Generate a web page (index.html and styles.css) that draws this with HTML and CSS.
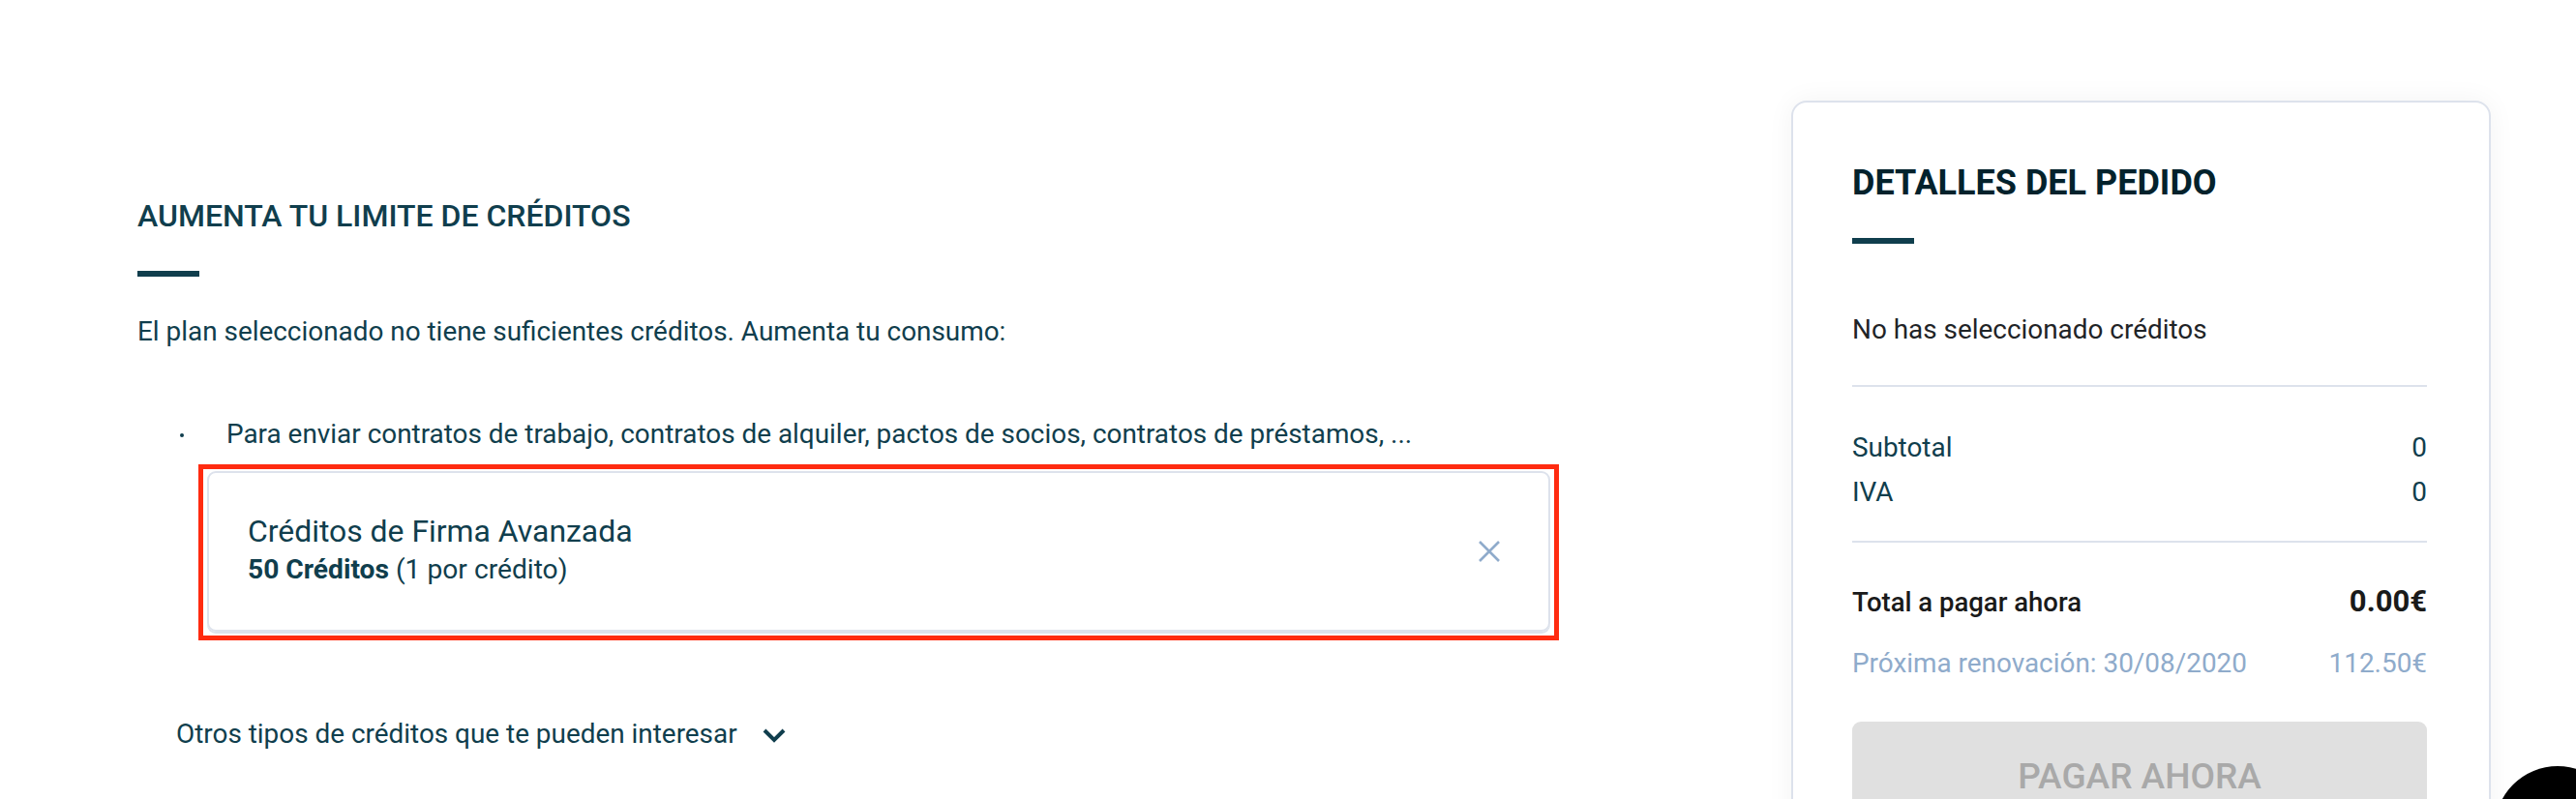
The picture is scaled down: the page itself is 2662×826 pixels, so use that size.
FILE: index.html
```html
<!DOCTYPE html>
<html lang="es">
<head>
<meta charset="utf-8">
<title>Aumenta tu limite de créditos</title>
<link rel="stylesheet" href="styles.css">
</head>
<body>
<div class="page">
  <main class="main-col">
    <h1 class="section-title">AUMENTA TU LIMITE DE CRÉDITOS</h1>
    <div class="accent-bar"></div>
    <p class="intro">El plan seleccionado no tiene suficientes créditos. Aumenta tu consumo:</p>
    <ul class="uses">
      <li class="use-item"><span class="dot"></span><span>Para enviar contratos de trabajo, contratos de alquiler, pactos de socios, contratos de préstamos, ...</span></li>
    </ul>
    <div class="highlight">
      <div class="credit-card">
        <div class="credit-info">
          <div class="credit-name">Créditos de Firma Avanzada</div>
          <div class="credit-qty"><strong>50 Créditos</strong> (1 por crédito)</div>
        </div>
        <svg class="close-icon" width="24" height="24" viewBox="0 0 24 24" aria-hidden="true">
          <path d="M2 2 L22 22 M22 2 L2 22" stroke="#8fabcb" stroke-width="2.6" fill="none"/>
        </svg>
      </div>
    </div>
    <div class="more">
      <span>Otros tipos de créditos que te pueden interesar</span>
      <svg class="chevron" width="24" height="16" viewBox="0 0 24 16" aria-hidden="true">
        <path d="M2 3 L12 13 L22 3" stroke="#103e4d" stroke-width="4" fill="none"/>
      </svg>
    </div>
  </main>
  <aside class="order">
    <h2 class="order-title">DETALLES DEL PEDIDO</h2>
    <div class="accent-bar"></div>
    <p class="empty">No has seleccionado créditos</p>
    <div class="divider"></div>
    <div class="row"><span>Subtotal</span><span>0</span></div>
    <div class="row"><span>IVA</span><span>0</span></div>
    <div class="divider divider-b"></div>
    <div class="row total"><span>Total a pagar ahora</span><span class="total-amount">0.00€</span></div>
    <div class="row renewal"><span>Próxima renovación: 30/08/2020</span><span>112.50€</span></div>
    <button class="pay" type="button">PAGAR AHORA</button>
  </aside>
</div>
<div class="chat-bubble"></div>
</body>
</html>
```

FILE: styles.css
```css
* { box-sizing: border-box; }
html, body {
  margin: 0;
  padding: 0;
  background: #ffffff;
  overflow: hidden;
}
body {
  font-family: Roboto, "Liberation Sans", Arial, sans-serif;
  color: #103e4d;
  width: 2662px;
  height: 826px;
}
.page {
  display: flex;
  align-items: flex-start;
  padding-left: 142px;
}
.main-col {
  width: 1469px;
  padding-top: 204px;
  flex-shrink: 0;
}
.section-title {
  margin: 0;
  font-size: 32px;
  line-height: 38px;
  font-weight: 500;
  color: #103e4d;
}
.accent-bar {
  width: 64px;
  height: 6px;
  background: #103e4d;
  margin-top: 38px;
}
.intro {
  margin: 41px 0 0;
  font-size: 27.9px;
  line-height: 32px;
}
.uses {
  list-style: none;
  margin: 74px 0 0;
  padding: 0 0 0 44px;
}
.use-item {
  display: flex;
  align-items: center;
  font-size: 27.9px;
  line-height: 32px;
}
.dot {
  width: 4px;
  height: 4px;
  border-radius: 50%;
  background: #103e4d;
  margin-right: 44px;
  margin-top: 2px;
  flex-shrink: 0;
}
.highlight {
  margin: 15px 0 0 63px;
  width: 1406px;
  border: 5px solid #ff2b10;
  padding: 2px 4px 4px 4px;
}
.credit-card {
  border: 2px solid #dde2ec;
  border-radius: 9px;
  box-shadow: 0 2px 0 #dde2ec;
  padding: 41px 49px 42px 40px;
  display: flex;
  align-items: center;
  justify-content: space-between;
}
.credit-name {
  font-size: 31.9px;
  line-height: 39px;
}
.credit-qty {
  font-size: 28.2px;
  line-height: 40px;
}
.credit-qty strong { font-weight: 700; }
.close-icon { display: block; }
.more {
  margin: 81px 0 0 40px;
  display: flex;
  align-items: center;
  font-size: 27.9px;
  line-height: 32px;
}
.chevron {
  margin-left: 26px;
  margin-top: 2px;
}
.order {
  margin-left: 240px;
  margin-top: 104px;
  width: 723px;
  height: 800px;
  flex-shrink: 0;
  border: 2px solid #dde2ec;
  border-radius: 16px;
  box-shadow: 0 0 28px rgba(0, 0, 0, 0.05);
  background: #fff;
  padding: 62px 64px 0 61px;
}
.order-title {
  margin: 0;
  font-size: 36px;
  line-height: 42px;
  font-weight: 700;
  color: #03222c;
}
.order .accent-bar { margin-top: 36px; }
.empty {
  margin: 73px 0 0;
  font-size: 27.9px;
  line-height: 32px;
  color: #1f2427;
}
.divider {
  height: 2px;
  background: #dde2ec;
  margin-top: 41px;
}
.divider + .row { margin-top: 40px; }
.divider-b { margin-top: 27px; }
.row {
  display: flex;
  justify-content: space-between;
  align-items: baseline;
  font-size: 27.9px;
  line-height: 46px;
}
.total {
  color: #1a1a1a;
  font-weight: 500;
  font-size: 27.5px;
}
.divider-b + .total { margin-top: 38px; }
.total-amount {
  font-size: 31px;
  font-weight: 700;
}
.renewal {
  margin-top: 17px;
  color: #8fabcb;
}
.pay {
  display: block;
  width: 100%;
  margin-top: 37px;
  height: 112px;
  border: none;
  border-radius: 9px;
  background: #e0e0e0;
  color: #a9a9a9;
  font-family: Roboto, "Liberation Sans", Arial, sans-serif;
  font-size: 37px;
  font-weight: 500;
  padding: 0;
}
.chat-bubble {
  position: fixed;
  left: 2578px;
  top: 792px;
  width: 130px;
  height: 130px;
  border-radius: 50%;
  background: #000;
}
```
